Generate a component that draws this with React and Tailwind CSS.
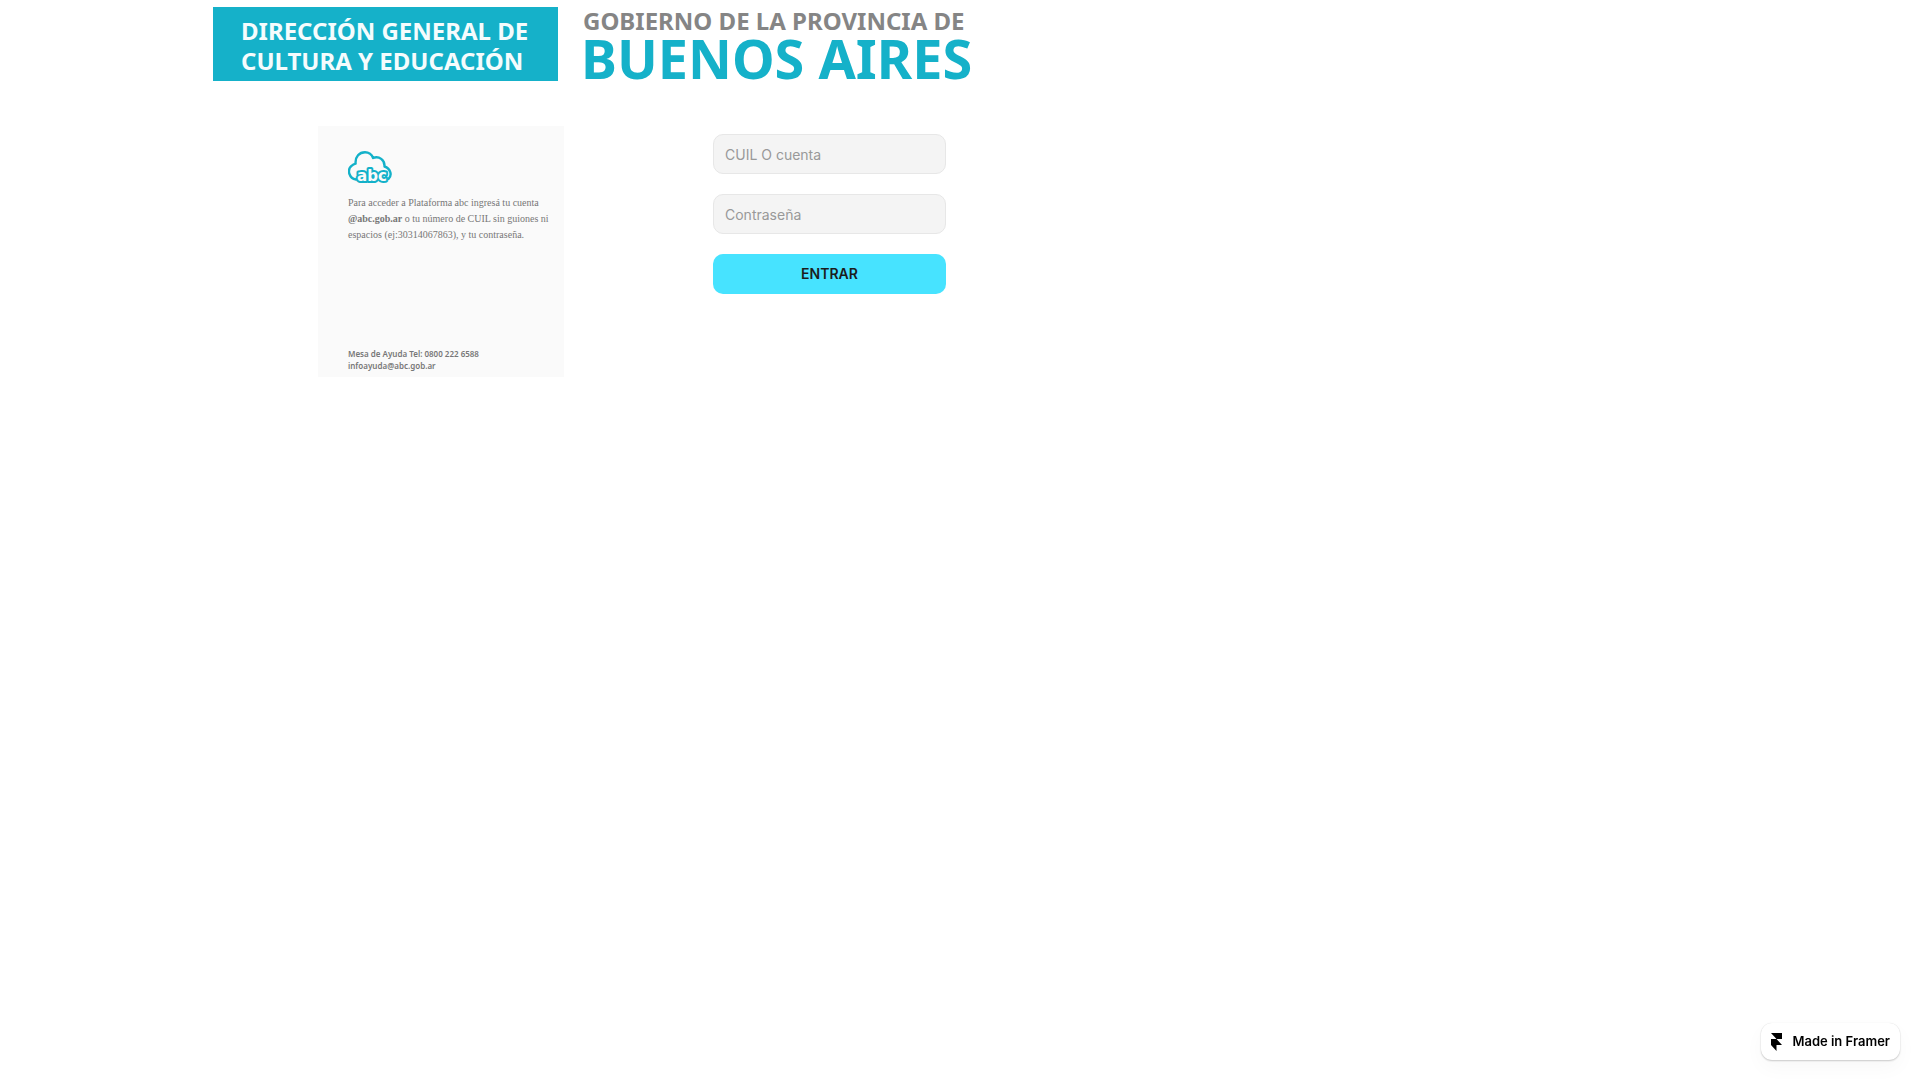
function CloudLogo() {
  return (
    <svg viewBox="0 0 44 34" className="h-[34px] w-11" fill="none" strokeLinecap="round" strokeLinejoin="round">
      <path
        d="M8 28.500C1 27.500 -1 19 3.200 15.200C4.500 14 6 13 7.600 12.600C7 5.500 11.500 1.300 17 1.300C20.500 1.300 24 3.500 25 7C31 4.500 37 9 36.500 15.500C42.500 17.500 44.500 24 40.500 28"
        stroke="#13b1c9"
        strokeWidth="2.400"
      />
      <text
        x="24"
        y="30"
        textAnchor="middle"
        className="fill-[#fafafa] stroke-[#13b1c9] stroke-[4px] font-['DejaVu_Sans',sans-serif] text-[15px] font-bold [paint-order:stroke]"
      >
        abc
      </text>
    </svg>
  );
}

function Field({ id, label, type }) {
  return (
    <input
      id={id}
      name={id}
      type={type}
      aria-label={label}
      placeholder={label}
      className="block h-10 w-full rounded-[10px] border border-[#e7e7e7] bg-[#f4f4f4] px-[11px] text-sm text-black placeholder:text-[#999999]"
    />
  );
}

export default function App() {
  return (
    <div className="min-h-screen bg-white font-['Inter',sans-serif]">
      <header className="flex gap-[25px] pt-[7px] pl-[213px] font-['Noto_Sans',sans-serif] whitespace-nowrap">
        <div className="flex h-[74px] w-[345px] flex-col justify-center bg-[#15b1c9] pt-1 pl-7 text-[24px] leading-[30px] font-bold text-[#f5fcfd]">
          <span>DIRECCIÓN GENERAL DE</span>
          <span>CULTURA Y EDUCACIÓN</span>
        </div>
        <div className="flex h-[74px] flex-col">
          <span className="text-[24px] leading-7 font-bold text-[#858585]">GOBIERNO DE LA PROVINCIA DE</span>
          <span className="-ml-0.5 text-[54px] leading-[46px] font-bold text-[#15b1c9]">BUENOS AIRES</span>
        </div>
      </header>

      <main className="mt-[45px] flex items-start gap-[149px] pl-[318px]">
        <section className="flex min-h-[251px] w-[246px] flex-col bg-[#fafafa] pt-[25px] pb-[5px] pl-[30px]">
          <CloudLogo />
          <p className="mt-2.5 font-['Liberation_Serif',serif] text-[10px] leading-4 whitespace-nowrap text-[#777777]">
            Para acceder a Plataforma abc ingresá tu cuenta
            <br />
            <strong>@abc.gob.ar</strong> o tu número de CUIL sin guiones ni
            <br />
            espacios (ej:30314067863), y tu contraseña.
          </p>
          <p className="mt-auto font-['Noto_Sans',sans-serif] text-[8px] leading-3 font-semibold text-[#777777]">
            Mesa de Ayuda Tel: 0800 222 6588
            <br />
            infoayuda@abc.gob.ar
          </p>
        </section>

        <form className="mt-2 flex w-[233px] flex-col gap-5" onSubmit={(event) => event.preventDefault()}>
          <Field id="cuil" label="CUIL O cuenta" type="text" />
          <Field id="password" label="Contraseña" type="password" />
          <button type="submit" className="h-10 rounded-[10px] bg-[#47e3ff] text-sm font-semibold text-[#1c1c1c]">
            ENTRAR
          </button>
        </form>
      </main>

      <a
        href="#framer"
        className="fixed right-5 bottom-5 flex h-[37px] items-center gap-2.5 rounded-[11px] bg-white px-2.5 text-[13px] font-semibold whitespace-nowrap text-black shadow-[0_1px_2px_rgba(0,0,0,0.2),0_0_1px_rgba(0,0,0,0.15),0_8px_20px_rgba(0,0,0,0.03)]"
      >
        <svg viewBox="0 0 11 18" className="h-[18px] w-[11px]" fill="currentColor" aria-hidden="true">
          <path d="M0 0H11V6H5.500ZM0 6H5.500L11 12H0ZM0 12H5.500V18Z" />
        </svg>
        Made in Framer
      </a>
    </div>
  );
}
